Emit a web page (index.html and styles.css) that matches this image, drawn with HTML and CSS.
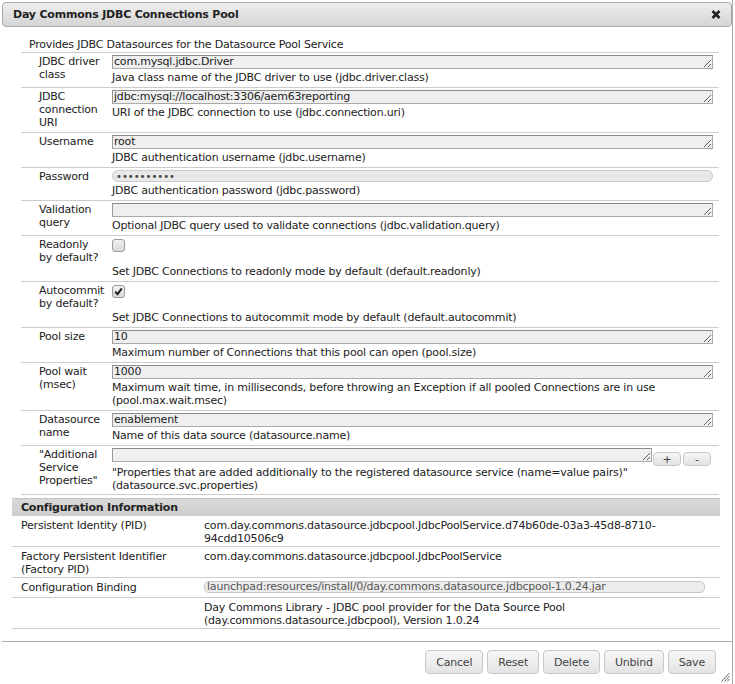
FILE: index.html
```html
<!DOCTYPE html>
<html>
<head>
<meta charset="utf-8">
<title>Day Commons JDBC Connections Pool</title>
<link rel="stylesheet" href="styles.css">
</head>
<body>
<div class="dialog">
  <div class="titlebar">
    <span class="title">Day Commons JDBC Connections Pool</span>
    <svg class="close" width="10" height="9" viewBox="0 0 10 9"><path d="M1.5 1 L8.5 8 M8.5 1 L1.5 8" stroke="#222" stroke-width="2.6" fill="none"/></svg>
  </div>
  <div class="content">
    <div class="intro">Provides JDBC Datasources for the Datasource Pool Service</div>

    <div class="row">
      <div class="label">JDBC driver class</div>
      <div class="field">
        <textarea class="input" rows="1">com.mysql.jdbc.Driver</textarea>
        <div class="desc">Java class name of the JDBC driver to use (jdbc.driver.class)</div>
      </div>
    </div>

    <div class="row">
      <div class="label">JDBC connection URI</div>
      <div class="field">
        <textarea class="input" rows="1">jdbc:mysql://localhost:3306/aem63reporting</textarea>
        <div class="desc">URI of the JDBC connection to use (jdbc.connection.uri)</div>
      </div>
    </div>

    <div class="row">
      <div class="label">Username</div>
      <div class="field">
        <textarea class="input" rows="1">root</textarea>
        <div class="desc">JDBC authentication username (jdbc.username)</div>
      </div>
    </div>

    <div class="row">
      <div class="label">Password</div>
      <div class="field">
        <input class="password" type="password" value="1234567890">
        <div class="desc">JDBC authentication password (jdbc.password)</div>
      </div>
    </div>

    <div class="row">
      <div class="label">Validation query</div>
      <div class="field">
        <textarea class="input" rows="1"></textarea>
        <div class="desc">Optional JDBC query used to validate connections (jdbc.validation.query)</div>
      </div>
    </div>

    <div class="row">
      <div class="label">Readonly<br>by default?</div>
      <div class="field">
        <span class="check"></span>
        <div class="desc desc-check">Set JDBC Connections to readonly mode by default (default.readonly)</div>
      </div>
    </div>

    <div class="row">
      <div class="label">Autocommit<br>by default?</div>
      <div class="field">
        <span class="check"><svg width="11" height="11" viewBox="0 0 11 11"><path d="M2.2 5.6 L4.6 8.2 L8.8 2.4" stroke="#222" stroke-width="2" fill="none"/></svg></span>
        <div class="desc desc-check">Set JDBC Connections to autocommit mode by default (default.autocommit)</div>
      </div>
    </div>

    <div class="row">
      <div class="label">Pool size</div>
      <div class="field">
        <textarea class="input" rows="1">10</textarea>
        <div class="desc">Maximum number of Connections that this pool can open (pool.size)</div>
      </div>
    </div>

    <div class="row">
      <div class="label">Pool wait (msec)</div>
      <div class="field">
        <textarea class="input" rows="1">1000</textarea>
        <div class="desc">Maximum wait time, in milliseconds, before throwing an Exception if all pooled Connections are in use (pool.max.wait.msec)</div>
      </div>
    </div>

    <div class="row">
      <div class="label">Datasource name</div>
      <div class="field">
        <textarea class="input" rows="1">enablement</textarea>
        <div class="desc">Name of this data source (datasource.name)</div>
      </div>
    </div>

    <div class="row row-multi">
      <div class="label">"Additional Service Properties"</div>
      <div class="field">
        <div class="multi">
          <textarea class="input input-multi" rows="1"></textarea>
          <button class="mini">+</button>
          <button class="mini">-</button>
        </div>
        <div class="desc desc-multi">"Properties that are added additionally to the registered datasource service (name=value pairs)" (datasource.svc.properties)</div>
      </div>
    </div>
  </div>

  <div class="config">
    <div class="config-head">Configuration Information</div>
    <div class="crow">
      <div class="clabel">Persistent Identity (PID)</div>
      <div class="cvalue">com.day.commons.datasource.jdbcpool.JdbcPoolService.d74b60de-03a3-45d8-8710-<br>94cdd10506c9</div>
    </div>
    <div class="crow">
      <div class="clabel">Factory Persistent Identifier (Factory PID)</div>
      <div class="cvalue">com.day.commons.datasource.jdbcpool.JdbcPoolService</div>
    </div>
    <div class="crow crow-binding">
      <div class="clabel">Configuration Binding</div>
      <div class="cvalue"><div class="binding">launchpad:resources/install/0/day.commons.datasource.jdbcpool-1.0.24.jar</div></div>
    </div>
    <div class="crow">
      <div class="clabel"></div>
      <div class="cvalue">Day Commons Library - JDBC pool provider for the Data Source Pool<br>(day.commons.datasource.jdbcpool), Version 1.0.24</div>
    </div>
  </div>

  <div class="buttonpane">
    <button class="btn">Cancel</button>
    <button class="btn">Reset</button>
    <button class="btn">Delete</button>
    <button class="btn">Unbind</button>
    <button class="btn">Save</button>
  </div>

  <svg class="grip" width="9" height="10" viewBox="0 0 9 10"><path d="M8.5 1 L0.5 9.5 M8.5 4 L3.5 9.5 M8.5 7 L6.2 9.5" stroke="#666" stroke-width="1" fill="none"/></svg>
</div>
</body>
</html>
```

FILE: styles.css
```css
html, body {
  margin: 0;
  padding: 0;
  background: #fff;
}

body {
  font-family: "DejaVu Sans", Verdana, sans-serif;
  font-size: 11px;
  letter-spacing: -0.2px;
  color: #222;
}

.dialog {
  position: relative;
  width: 730px;
  height: 682px;
  padding: 2px 0 0 2px;
  border-right: 1px solid #aaa;
}

.titlebar {
  box-sizing: border-box;
  height: 25px;
  border: 1px solid #aaa;
  border-radius: 4px;
  background: linear-gradient(#eeeeee, #d5d5d5);
  display: flex;
  align-items: center;
  justify-content: space-between;
  padding: 0 10px 0 10px;
}

.title {
  font-weight: bold;
  font-size: 11px;
  color: #222;
}

.close {
  display: block;
}

.content {
  margin: 0 13px 0 19px;
}

.intro {
  padding: 11px 0 1px 8px;
  line-height: 13px;
  border-bottom: 1px solid #ccc;
}

.row {
  display: flex;
  border-bottom: 1px solid #ccc;
  padding: 2px 0 3px;
  line-height: 13px;
}

.row-multi {
  padding-bottom: 2px;
}

.label {
  box-sizing: content-box;
  width: 68px;
  padding-left: 18px;
}

.field {
  margin-left: 5px;
  flex: 1;
}

.input {
  display: block;
  box-sizing: border-box;
  width: 601px;
  height: 14px;
  margin: 0;
  padding: 0 1px;
  border: 1px solid #aaa;
  border-top-color: #8c8c8c;
  border-left-color: #999;
  background: #efefef;
  font: inherit;
  letter-spacing: inherit;
  line-height: 12px;
  color: #222;
  resize: both;
  overflow: hidden;
  white-space: nowrap;
}

.password {
  display: block;
  box-sizing: border-box;
  width: 601px;
  height: 12px;
  margin: 0;
  padding: 0 3px;
  border: 1px solid #ccc;
  border-radius: 6px;
  background: #e8e8e8;
  font-family: inherit;
  font-size: 10px;
  letter-spacing: 0;
  color: #444;
  outline: none;
}

.desc {
  margin-top: 2px;
}

.check {
  display: block;
  box-sizing: border-box;
  width: 13px;
  height: 13px;
  margin-top: 1px;
  border: 1px solid #9a9a9a;
  border-radius: 3px;
  background: linear-gradient(#f2f2f2, #d9d9d9);
}

.check svg {
  display: block;
}

.desc-check {
  margin-top: 13px;
}

.multi {
  display: flex;
  align-items: flex-start;
  height: 18px;
}

.input-multi {
  width: 540px;
}

.mini {
  box-sizing: border-box;
  width: 28px;
  height: 14px;
  margin: 4px 0 0 2px;
  padding: 0;
  border: 1px solid #c8c8c8;
  border-radius: 4px;
  background: linear-gradient(#f6f6f6, #e2e2e2);
  font-family: inherit;
  font-size: 11px;
  line-height: 11px;
  color: #444;
}

.input-multi + .mini {
  margin-left: 1px;
}

.desc-multi {
  margin-top: 0;
}

.config {
  margin: 3px 12px 0 10px;
}

.config-head {
  box-sizing: border-box;
  height: 18px;
  line-height: 17px;
  padding-left: 9px;
  font-weight: bold;
  color: #222;
  border-top: 1px solid #c4c4c4;
  background: linear-gradient(#d9d9d9, #cdcdcd);
}

.crow {
  display: flex;
  padding: 3px 0 1px 9px;
  line-height: 13px;
  border-bottom: 1px solid #ccc;
}

.crow-binding {
  padding-bottom: 3px;
}

.clabel {
  width: 183px;
  flex: none;
}

.cvalue {
  flex: 1;
}

.binding {
  box-sizing: border-box;
  width: 501px;
  height: 12px;
  line-height: 10px;
  padding-left: 2px;
  border: 1px solid #c6c6c6;
  border-radius: 5px;
  background: #ececec;
  color: #555;
}

.buttonpane {
  margin-top: 12px;
  border-top: 1px solid #aaa;
  display: flex;
  justify-content: flex-end;
  gap: 4px;
  padding: 8px 16px 0 0;
}

.btn {
  height: 24px;
  padding: 0 10px;
  border: 1px solid #c8c8c8;
  border-radius: 4px;
  background: linear-gradient(#f7f7f7, #e3e3e3);
  font-family: inherit;
  font-size: 11px;
  letter-spacing: -0.2px;
  color: #444;
}

.grip {
  position: absolute;
  right: 2px;
  bottom: 2px;
}
```
